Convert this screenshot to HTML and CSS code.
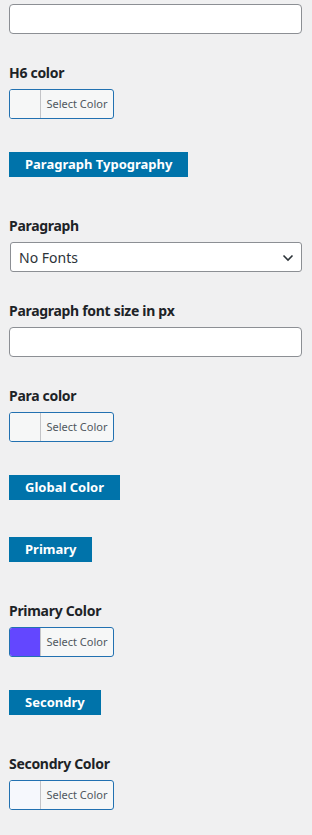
FILE: index.html
```html
<!DOCTYPE html>
<html lang="en">
<head>
    <meta charset="UTF-8">
    <meta name="viewport" content="width=device-width, initial-scale=1.0">
    <link rel="stylesheet" href="styles.css">
    <title>Customizer</title>
</head>
<body>
    <div class="panel">
        <!-- ช่องกรอกด้านบน -->
        <div class="control">
            <input type="text" class="text-field">
        </div>

        <div class="control">
            <span class="control-title">H6 color</span>
            <button class="color-btn"><span class="swatch"></span><span class="color-text">Select Color</span></button>
        </div>

        <h3 class="section-title">Paragraph Typography</h3>

        <div class="control">
            <span class="control-title">Paragraph</span>
            <div class="select-wrap">
                <select class="select-field">
                    <option>No Fonts</option>
                </select>
                <svg class="chevron" width="12" height="8" viewBox="0 0 12 8"><path d="M1.5 1.5 L6 6 L10.5 1.5" fill="none" stroke="#2c3338" stroke-width="1.6"/></svg>
            </div>
        </div>

        <div class="control">
            <span class="control-title">Paragraph font size in px</span>
            <input type="text" class="text-field">
        </div>

        <div class="control">
            <span class="control-title">Para color</span>
            <button class="color-btn"><span class="swatch"></span><span class="color-text">Select Color</span></button>
        </div>

        <h3 class="section-title">Global Color</h3>

        <h3 class="section-title">Primary</h3>

        <div class="control">
            <span class="control-title">Primary Color</span>
            <button class="color-btn"><span class="swatch swatch-primary"></span><span class="color-text">Select Color</span></button>
        </div>

        <h3 class="section-title">Secondry</h3>

        <div class="control">
            <span class="control-title">Secondry Color</span>
            <button class="color-btn"><span class="swatch swatch-secondary"></span><span class="color-text">Select Color</span></button>
        </div>
    </div>
</body>
</html>
```

FILE: styles.css
```css
html {
    background-color: #f0f0f1;
}

body {
    font-family: "Noto Sans", "Open Sans", sans-serif;
    margin: 0;
    padding: 0;
    color: #1d2327;
}

.panel {
    padding: 4px 10px 0 9px;
}

/* แต่ละช่องตั้งค่า */
.control {
    margin-bottom: 29px;
}

.section-title + .control {
    padding-top: 2px;
}

.control-title {
    display: block;
    font-size: 14px;
    font-weight: 700;
    line-height: 20px;
    letter-spacing: -0.3px;
    margin-bottom: 6px;
}

.text-field {
    display: block;
    box-sizing: border-box;
    width: 100%;
    height: 30px;
    margin: 0;
    border: 1px solid #8c8f94;
    border-radius: 4px;
    background-color: #fff;
}

/* dropdown */
.select-wrap {
    position: relative;
    margin-left: 1px;
}

.select-field {
    display: block;
    box-sizing: border-box;
    width: 100%;
    height: 30px;
    margin: 0;
    padding: 0 24px 0 8px;
    border: 1px solid #8c8f94;
    border-radius: 3px;
    background-color: #fff;
    font-family: "Noto Sans", "Open Sans", sans-serif;
    font-size: 14px;
    color: #2c3338;
    appearance: none;
    -webkit-appearance: none;
}

.chevron {
    position: absolute;
    right: 8px;
    top: 12px;
}

/* ปุ่มเลือกสี */
.color-btn {
    display: flex;
    box-sizing: border-box;
    width: 105px;
    height: 30px;
    margin: 0;
    padding: 0;
    border: 1px solid #2271b1;
    border-radius: 3px;
    background-color: #f6f7f7;
    overflow: hidden;
}

.swatch {
    width: 30px;
    height: 100%;
    border-right: 1px solid #c3c4c7;
    background-color: #f6f7f7;
}

.swatch-primary {
    background-color: #6347ff;
}

.swatch-secondary {
    background-color: #f6f8fd;
}

.color-text {
    flex: 1;
    font-family: "Noto Sans", "Open Sans", sans-serif;
    font-size: 11px;
    line-height: 28px;
    color: #50575e;
    text-align: center;
}

/* หัวข้อสีฟ้า */
.section-title {
    display: block;
    width: fit-content;
    margin: 33px 0 37px;
    padding: 0 16px;
    height: 25px;
    line-height: 25px;
    font-size: 13px;
    font-weight: 700;
    color: #fff;
    background-color: #0073aa;
}
```
